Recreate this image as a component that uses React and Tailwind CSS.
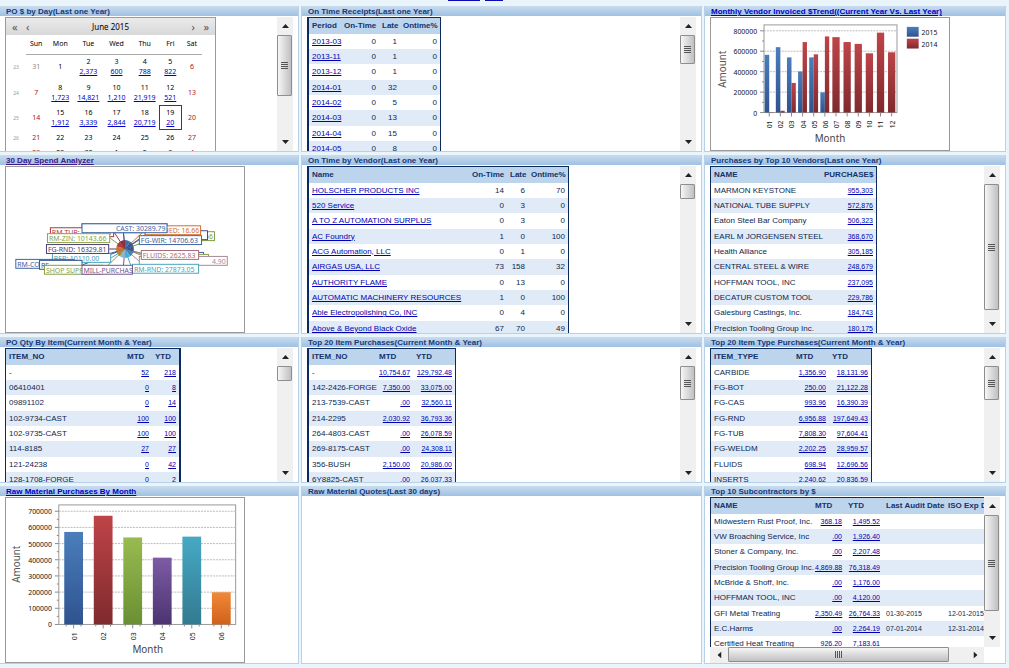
const receipts = [
  ["2013-03", "0", "1", "0"],
  ["2013-11", "0", "1", "0"],
  ["2013-12", "0", "1", "0"],
  ["2014-01", "0", "32", "0"],
  ["2014-02", "0", "5", "0"],
  ["2014-03", "0", "13", "0"],
  ["2014-04", "0", "15", "0"],
  ["2014-05", "0", "8", "0"],
]

const onTimeVendors = [
  ["HOLSCHER PRODUCTS INC", "14", "6", "70"],
  ["520 Service", "0", "3", "0"],
  ["A TO Z AUTOMATION SURPLUS", "0", "3", "0"],
  ["AC Foundry", "1", "0", "100"],
  ["ACG Automation, LLC", "0", "1", "0"],
  ["AIRGAS USA, LLC", "73", "158", "32"],
  ["AUTHORITY FLAME", "0", "13", "0"],
  ["AUTOMATIC MACHINERY RESOURCES", "1", "0", "100"],
  ["Able Electropolishing Co, INC", "0", "4", "0"],
  ["Above & Beyond Black Oxide", "67", "70", "49"],
]

const topVendors = [
  ["MARMON KEYSTONE", "955,303"],
  ["NATIONAL TUBE SUPPLY", "572,876"],
  ["Eaton Steel Bar Company", "506,323"],
  ["EARL M JORGENSEN STEEL", "368,670"],
  ["Health Alliance", "305,185"],
  ["CENTRAL STEEL & WIRE", "248,679"],
  ["HOFFMAN TOOL, INC", "237,095"],
  ["DECATUR CUSTOM TOOL", "229,786"],
  ["Galesburg Castings, Inc.", "184,743"],
  ["Precision Tooling Group Inc.", "180,175"],
]

const poQty = [
  ["-", "52", "218"],
  ["06410401", "0", "8"],
  ["09891102", "0", "14"],
  ["102-9734-CAST", "100", "100"],
  ["102-9735-CAST", "100", "100"],
  ["114-8185", "27", "27"],
  ["121-24238", "0", "42"],
  ["128-1708-FORGE", "0", "2"],
]

const itemPurchases = [
  ["-", "10,754.67", "129,792.48"],
  ["142-2426-FORGE", "7,350.00", "33,075.00"],
  ["213-7539-CAST", ".00", "32,560.11"],
  ["214-2295", "2,030.92", "36,793.36"],
  ["264-4803-CAST", ".00", "26,078.59"],
  ["269-8175-CAST", ".00", "24,308.11"],
  ["356-BUSH", "2,150.00", "20,986.00"],
  ["6Y8825-CAST", ".00", "26,037.33"],
]

const typePurchases = [
  ["CARBIDE", "1,356.90", "18,131.96"],
  ["FG-BOT", "250.00", "21,122.28"],
  ["FG-CAS", "993.96", "16,390.39"],
  ["FG-RND", "6,956.88", "197,649.43"],
  ["FG-TUB", "7,808.30", "97,604.41"],
  ["FG-WELDM", "2,202.25", "28,959.57"],
  ["FLUIDS", "698.94", "12,696.56"],
  ["INSERTS", "2,240.62", "20,836.59"],
]

const subcontractors = [
  ["Midwestern Rust Proof, Inc.", "368.18", "1,495.52", "", ""],
  ["VW Broaching Service, Inc", ".00", "1,926.40", "", ""],
  ["Stoner & Company, Inc.", ".00", "2,207.48", "", ""],
  ["Precision Tooling Group Inc.", "4,869.88", "76,318.49", "", ""],
  ["McBride & Shoff, Inc.", ".00", "1,176.00", "", ""],
  ["HOFFMAN TOOL, INC", ".00", "4,120.00", "", ""],
  ["GFI Metal Treating", "2,350.49", "26,764.33", "01-30-2015", "12-01-2015"],
  ["E.C.Harms", ".00", "2,264.19", "07-01-2014", "12-31-2014"],
  ["Certified Heat Treating", "926.20", "7,183.61", "", ""],
]

const receiptCols = [
  { label: "Period", width: "w-[32px]", link: true },
  { label: "On-Time", width: "w-[38px]", right: true, headRight: true },
  { label: "Late", width: "w-[21px]", right: true, headRight: true },
  { label: "Ontime%", width: "w-[40px]", right: true, headRight: true },
]

const vendorCols = [
  { label: "Name", width: "w-[160px]", link: true },
  { label: "On-Time", width: "w-[38px]", right: true, headRight: true },
  { label: "Late", width: "w-[21px]", right: true, headRight: true },
  { label: "Ontime%", width: "w-[40px]", right: true, headRight: true },
]

const topVendorCols = [
  { label: "NAME", width: "w-[110px]" },
  { label: "PURCHASE$", width: "w-[55px]", right: true, link: true, headRight: true },
]

const poQtyCols = [
  { label: "ITEM_NO", width: "w-[118px]" },
  { label: "MTD", width: "w-[28px]", right: true, link: true },
  { label: "YTD", width: "w-[27px]", right: true, link: true },
]

const itemCols = [
  { label: "ITEM_NO", width: "w-[67px]" },
  { label: "MTD", width: "w-[37px]", right: true, link: true },
  { label: "YTD", width: "w-[42px]", right: true, link: true },
]

const typeCols = [
  { label: "ITEM_TYPE", width: "w-[82px]" },
  { label: "MTD", width: "w-[36px]", right: true, link: true },
  { label: "YTD", width: "w-[42px]", right: true, link: true },
]

const subCols = [
  { label: "NAME", width: "w-[101px]" },
  { label: "MTD", width: "w-[33px]", right: true, link: true },
  { label: "YTD", width: "w-[38px]", right: true, link: true },
  { label: "Last Audit Date", width: "w-[62px]", date: true },
  { label: "ISO Exp Date", width: "w-[60px]", date: true },
]

const weeks = [
  { no: "23", height: "h-[26px]", days: [["31"], ["1"], ["2", "2,373"], ["3", "600"], ["4", "788"], ["5", "822"], ["6"]] },
  { no: "24", height: "h-[25px]", days: [["7"], ["8", "1,723"], ["9", "14,821"], ["10", "1,210"], ["11", "21,919"], ["12", "521"], ["13"]] },
  { no: "25", height: "h-[25px]", days: [["14"], ["15", "1,912"], ["16", "3,339"], ["17", "2,844"], ["18", "20,719"], ["19", "20"], ["20"]] },
  { no: "26", height: "h-[15px]", days: [["21"], ["22"], ["23"], ["24"], ["25"], ["26"], ["27"]] },
  { no: "27", height: "h-[15px]", days: [["28"], ["29"], ["30"], ["1"], ["2"], ["3"], ["4"]] },
]

const DataTable = ({ cols, rows, frame }) => (
  <table className={`table-fixed w-px border-separate border-spacing-0 border-[#0b2a5e] text-[8px] leading-[10px] text-[#0d1f4d] whitespace-nowrap ${frame}`}>
    <thead>
      <tr className="h-4 bg-[#bcd5ed]">
        {cols.map((col) => (
          <th key={col.label} className={`${col.width} px-[3px] font-bold text-[#15326c] ${col.headRight ? "text-right" : "text-left"}`}>
            {col.label}
          </th>
        ))}
      </tr>
    </thead>
    <tbody>
      {rows.map((row, i) => (
        <tr key={i} className="h-[15px] nth-[3n]:h-4 even:bg-[#e0ebf7]">
          {row.map((cell, j) => (
            <td key={j} className={`px-[3px] ${cols[j].right ? "text-right" : ""} ${(cols[j].right && cols[j].link) || cols[j].date ? "text-[7px]" : ""}`}>
              {cols[j].link ? (
                <a href="#" className="text-[#0000b4] underline">{cell}</a>
              ) : (
                cell
              )}
            </td>
          ))}
        </tr>
      ))}
    </tbody>
  </table>
)

const Arrow = ({ className }) => (
  <svg viewBox="0 0 7 4" className={`h-1 w-[7px] ${className}`} fill="#222">
    <path d="M3.5 0 7 4H0z" />
  </svg>
)

const ScrollBar = ({ thumb, grip = true }) => (
  <div className="flex w-4 shrink-0 flex-col bg-[#f0f0f0]">
    <button aria-label="Scroll up" className="flex h-[18px] shrink-0 items-center justify-center">
      <Arrow className="" />
    </button>
    <div className="min-h-0 flex-1">
      <div className={`flex w-[15px] flex-col items-center justify-center gap-px rounded-[1px] border border-[#8e8e8e] bg-linear-to-r from-[#f6f6f6] to-[#c0c0c3] ${thumb}`}>
        {grip && (
          <>
            <span className="h-px w-[7px] bg-[#555]" />
            <span className="h-px w-[7px] bg-[#555]" />
            <span className="h-px w-[7px] bg-[#555]" />
            <span className="h-px w-[7px] bg-[#555]" />
          </>
        )}
      </div>
    </div>
    <button aria-label="Scroll down" className="flex h-[18px] shrink-0 items-center justify-center">
      <Arrow className="rotate-180" />
    </button>
  </div>
)

const HScrollBar = () => (
  <div className="flex h-4 shrink-0 bg-[#f0f0f0]">
    <button aria-label="Scroll left" className="flex w-[18px] shrink-0 items-center justify-center">
      <Arrow className="-rotate-90" />
    </button>
    <div className="min-w-0 flex-1">
      <div className="flex h-[15px] w-[93%] items-center justify-center gap-px rounded-[1px] border border-[#8e8e8e] bg-linear-to-b from-[#f6f6f6] to-[#c0c0c3]">
        <span className="h-[7px] w-px bg-[#555]" />
        <span className="h-[7px] w-px bg-[#555]" />
        <span className="h-[7px] w-px bg-[#555]" />
        <span className="h-[7px] w-px bg-[#555]" />
      </div>
    </div>
    <button aria-label="Scroll right" className="flex w-[18px] shrink-0 items-center justify-center">
      <Arrow className="rotate-90" />
    </button>
  </div>
)

const Panel = ({ title, link, first, scroll, children }) => (
  <section className={`flex min-w-0 flex-col border-r border-b border-[#b7d2e8] bg-white ${first ? "" : "border-l"}`}>
    <h2 className="h-[10px] shrink-0 bg-linear-to-b from-[#c9dcee] to-[#9fc1e2] px-1.5 pt-px text-[8px] leading-[10px] font-bold whitespace-nowrap text-[#15397c]">
      {link ? <a href="#" className={`underline ${link}`}>{title}</a> : title}
    </h2>
    <div className="flex min-h-0 flex-1 justify-between px-[5px] pt-px">
      <div className="min-w-0 flex-1 overflow-hidden">{children}</div>
      {scroll}
    </div>
  </section>
)

const dayColor = (week, day) => {
  if (week === 0 && day === 0) return "text-[#888]"
  if (day === 0 || day === 6) return "text-[#b01020]"
  return "text-black"
}

const Calendar = () => (
  <div className="w-[211px] border border-[#9b9b9b] font-['Noto_Sans',sans-serif] text-[7px] leading-[10px]">
    <div className="flex h-[17px] items-center bg-linear-to-b from-[#ebebeb] to-[#d8d8d8] px-1.5">
      <button aria-label="Previous year" className="w-[14px] text-left text-[11px] text-[#555]">«</button>
      <button aria-label="Previous month" className="w-[14px] text-left text-[11px] text-[#555]">‹</button>
      <span className="flex-1 text-center text-[8px] text-black">June 2015</span>
      <button aria-label="Next month" className="w-[14px] text-right text-[11px] text-[#555]">›</button>
      <button aria-label="Next year" className="w-[14px] text-right text-[11px] text-[#555]">»</button>
    </div>
    <table className="table-fixed w-[196px] border-collapse text-center">
      <thead>
        <tr className="h-[19px] text-black">
          <th className="w-[20px]" />
          <th className="w-[20px] border-b border-[#aaa] font-normal">Sun</th>
          <th className="w-[28px] border-b border-[#aaa] font-normal">Mon</th>
          <th className="w-[28px] border-b border-[#aaa] font-normal">Tue</th>
          <th className="w-[28px] border-b border-[#aaa] font-normal">Wed</th>
          <th className="w-[28px] border-b border-[#aaa] font-normal">Thu</th>
          <th className="w-[23px] border-b border-[#aaa] font-normal">Fri</th>
          <th className="w-[20px] border-b border-[#aaa] font-normal">Sat</th>
        </tr>
      </thead>
      <tbody>
        {weeks.map((week, w) => (
          <tr key={week.no} className={week.height}>
            <td className="p-0 text-[5px] text-[#999]">{week.no}</td>
            {week.days.map(([day, amount], d) => (
              <td key={d} className={`p-0 ${dayColor(w, d)} ${day === "19" ? "shadow-[inset_0_0_0_1px_#8b1a2a]" : ""}`}>
                {day}
                {amount && <a href="#" className="block text-[#0000c8] underline">{amount}</a>}
              </td>
            ))}
          </tr>
        ))}
      </tbody>
    </table>
  </div>
)

const Gradients = ({ colors }) => (
  <defs>
    {colors.map(([id, from, to]) => (
      <linearGradient key={id} id={id} x1="0" y1="0" x2="0" y2="1">
        <stop offset="0" stopColor={from} />
        <stop offset="1" stopColor={to} />
      </linearGradient>
    ))}
  </defs>
)

const Axes = ({ left, right, top, bottom, step, ticks, scale }) => (
  <g>
    <rect x={left} y={top} width={right - left} height={bottom - top} fill="#fff" stroke="#999" />
    {ticks.map((tick) => {
      const y = bottom - tick * scale
      return (
        <g key={tick}>
          {tick > 0 && <line x1={left} x2={right} y1={y} y2={y} stroke="#bbb" strokeDasharray="2 1" />}
          <line x1={left - 4} x2={left} y1={y} y2={y} stroke="#888" />
          {tick > 0 && <line x1={left - 2} x2={left} y1={y + (step * scale) / 2} y2={y + (step * scale) / 2} stroke="#888" />}
          <text x="46" y={y + 3} textAnchor="end" fontSize="7" fill="#111">{tick}</text>
        </g>
      )
    })}
  </g>
)

const current = [565000, 640000, 540000, 402000, 540000, 198000]
const previous = [3000, 18000, 290000, 690000, 570000, 745000, 738000, 690000, 672000, 580000, 782000, 590000]

const TrendChart = () => {
  const scale = 83 / 800000
  return (
    <svg viewBox="0 0 240 134" className="h-[134px] w-60 border border-[#999] font-['Noto_Sans',sans-serif]">
      <Gradients colors={[["blue15", "#4a7ebb", "#2f538f"], ["red14", "#be4448", "#7f2a2d"]]} />
      <Axes left={53} right={188} top={7} bottom={96} step={200000} ticks={[0, 200000, 400000, 600000, 800000]} scale={scale} />
      {previous.map((value, i) => {
        const x = 58.3 + i * 11.3
        const both = i < current.length
        return (
          <g key={i}>
            {both && <rect x={x - 4.6} y={96 - current[i] * scale} width="4.6" height={current[i] * scale} fill="url(#blue15)" />}
            <rect x={both ? x : x - 3.7} y={96 - value * scale} width={both ? 4.4 : 7.4} height={value * scale} fill="url(#red14)" />
            <line x1={x} x2={x} y1="96" y2="100" stroke="#888" />
            <text transform={`translate(${x + 3} 108) rotate(-90)`} textAnchor="middle" fontSize="7" fill="#111">
              {String(i + 1).padStart(2, "0")}
            </text>
          </g>
        )
      })}
      <text transform="translate(14 52) rotate(-90)" textAnchor="middle" fontSize="10" fill="#555">Amount</text>
      <text x="120" y="126" textAnchor="middle" fontSize="10" fill="#444">Month</text>
      <rect x="198" y="9" width="12" height="10" fill="url(#blue15)" />
      <rect x="198" y="21" width="12" height="10" fill="url(#red14)" />
      <text x="213" y="17" fontSize="7" fill="#111">2015</text>
      <text x="213" y="29" fontSize="7" fill="#111">2014</text>
    </svg>
  )
}

const rawMaterial = [
  ["01", 572000, "url(#rmBlue)"],
  ["02", 672000, "url(#rmRed)"],
  ["03", 538000, "url(#rmGreen)"],
  ["04", 413000, "url(#rmPurple)"],
  ["05", 543000, "url(#rmTeal)"],
  ["06", 199000, "url(#rmOrange)"],
]

const RawMaterialChart = () => {
  const scale = 114.6 / 700000
  return (
    <svg viewBox="0 0 240 166" className="h-[166px] w-60 border border-[#999] font-['Noto_Sans',sans-serif]">
      <Gradients
        colors={[
          ["rmBlue", "#4a7ebb", "#2f538f"],
          ["rmRed", "#be4448", "#7f2a2d"],
          ["rmGreen", "#98bb50", "#6a8f33"],
          ["rmPurple", "#7d5ba6", "#4b3470"],
          ["rmTeal", "#46a9c4", "#337a90"],
          ["rmOrange", "#f0883a", "#d0621a"],
        ]}
      />
      <Axes left={53} right={232} top={7} bottom={128} step={100000} ticks={[0, 100000, 200000, 300000, 400000, 500000, 600000, 700000]} scale={scale} />
      {rawMaterial.map(([month, value, fill], i) => {
        const x = 68 + i * 29.9
        return (
          <g key={month}>
            <rect x={x - 9.5} y={128 - value * scale} width="19" height={value * scale} fill={fill} />
            <line x1={x} x2={x} y1="128" y2="132" stroke="#888" />
            <line x1={x - 7.5} x2={x - 7.5} y1="128" y2="130" stroke="#888" />
            <line x1={x + 7.5} x2={x + 7.5} y1="128" y2="130" stroke="#888" />
            <text transform={`translate(${x + 3} 140) rotate(-90)`} textAnchor="middle" fontSize="7" fill="#111">{month}</text>
          </g>
        )
      })}
      <text transform="translate(14 67) rotate(-90)" textAnchor="middle" fontSize="10" fill="#555">Amount</text>
      <text x="143" y="157" textAnchor="middle" fontSize="10" fill="#444">Month</text>
    </svg>
  )
}

// back to front: x, y, width, colour, text
const spendLabels = [
  [76, 57, 87, "#3d63a0", "RM-RAW"],
  [156, 65, 55, "#7d9a3c", "TOOLING: 4.56"],
  [140, 64, 64, "#5a4480", "INSERTS: 371.04"],
  [134, 69, 64, "#3d63a0", "FG-WIR: 14706.63"],
  [44, 61, 65, "#a8383c", "RM-TUB: 17268.08"],
  [46, 87, 60, "#46a0b8", "REP: 10110.00"],
  [9, 93, 60, "#3d63a0", "RM-COIL: 2931.11"],
  [33, 94, 44, "#2f538f", "RE"],
  [150, 86, 50, "#3d63a0", "PLATE: 811.01"],
  [155, 88, 50, "#8aa04a", "STEEL: 600.12"],
  [134, 90, 90, "#a48a94", "4.90"],
  [127, 98, 68, "#4aa3bd", "RM-RND: 27873.05"],
  [38, 99, 60, "#7f9f45", "SHOP SUPPLIES"],
  [76, 99, 52, "#6f568f", "MILL-PURCHAS"],
  [140, 59, 57, "#d2702a", "LATHED: 16.66"],
  [76, 57, 87, "#3d63a0", "CAST: 30289.79"],
  [41, 67, 64, "#86a347", "RM-ZIN: 10143.66"],
  [40, 78, 64, "#4d3a75", "FG-RND: 16329.81"],
  [136, 84, 59, "#a86c78", "FLUIDS: 2625.83"],
]

const endAligned = ["CAST: 30289.79", "LATHED: 16.66", "4.90", "TOOLING: 4.56"]

const slices = ["#3b6fa8", "#345a94", "#4a4f8f", "#3e86b5", "#46b0cf", "#8fb0d8", "#a98a3c", "#d0702a", "#b23a3e", "#8c3044"]

const pieSlice = (i) => {
  const a = (i / slices.length) * Math.PI * 2 - Math.PI / 2
  const b = ((i + 1) / slices.length) * Math.PI * 2 - Math.PI / 2
  return `M120 83L${120 + 9 * Math.cos(a)} ${83 + 9 * Math.sin(a)}A9 9 0 0 1 ${120 + 9 * Math.cos(b)} ${83 + 9 * Math.sin(b)}z`
}

const SpendChart = () => (
  <svg viewBox="0 0 240 167" className="h-[167px] w-60 border border-[#999] font-['Noto_Sans',sans-serif]">
    {spendLabels.map(([x, y, width, color], i) => (
      <line key={i} x1="120" y1="83" x2={x < 100 ? Math.min(x + width, 118) : x} y2={y + 5} stroke={color} />
    ))}
    {slices.map((color, i) => (
      <path key={i} d={pieSlice(i)} fill={color} />
    ))}
    {spendLabels.map(([x, y, width, color, text], i) => {
      const atEnd = endAligned.includes(text)
      return (
        <g key={i}>
          <rect x={x + 0.5} y={y + 0.5} width={width - 1} height="9" fill="#fff" stroke={color} />
          <text x={atEnd ? x + width - 2 : x + 2} y={y + 8} textAnchor={atEnd ? "end" : "start"} fontSize="7" fill={color}>
            {text}
          </text>
        </g>
      )
    })}
  </svg>
)

const App = () => {
  return (
    <main className="min-h-screen bg-[#e9f4fb] pr-[3px] font-['Liberation_Sans',Arial,sans-serif]">
      <div className="flex h-1.5 justify-center gap-[5px] pr-14" aria-hidden="true">
        <span className="h-px w-8 bg-[#0b0bb8]" />
        <span className="h-px w-[18px] bg-[#0b0bb8]" />
      </div>
      <div className="grid grid-cols-[299fr_401fr_302fr] grid-rows-[146px_179px_146px_178px] gap-x-[2px] gap-y-[3px]">
        <Panel first title="PO $ by Day(Last one Year)" scroll={<ScrollBar thumb="h-[61px]" />}>
          <Calendar />
        </Panel>
        <Panel title="On Time Receipts(Last one Year)" scroll={<ScrollBar thumb="h-[29px]" />}>
          <DataTable cols={receiptCols} rows={receipts} frame="border-t border-l-2 border-r" />
        </Panel>
        <Panel title="Monthly Vendor Invoiced $Trend((Current Year Vs. Last Year)" link="text-[#0000c8]">
          <TrendChart />
        </Panel>

        <Panel first title="30 Day Spend Analyzer" link="text-[#3c1a8c]">
          <SpendChart />
        </Panel>
        <Panel title="On Time by Vendor(Last one Year)" scroll={<ScrollBar thumb="h-[15px]" grip={false} />}>
          <DataTable cols={vendorCols} rows={onTimeVendors} frame="border-t border-l-2 border-r" />
        </Panel>
        <Panel title="Purchases by Top 10 Vendors(Last one Year)" scroll={<ScrollBar thumb="h-[126px]" />}>
          <DataTable cols={topVendorCols} rows={topVendors} frame="border-x border-t" />
        </Panel>

        <Panel first title="PO Qty By Item(Current Month & Year)" scroll={<ScrollBar thumb="h-[15px]" grip={false} />}>
          <DataTable cols={poQtyCols} rows={poQty} frame="border-t border-l border-r-2" />
        </Panel>
        <Panel title="Top 20 Item Purchases(Current Month & Year)" scroll={<ScrollBar thumb="h-[34px]" />}>
          <DataTable cols={itemCols} rows={itemPurchases} frame="border-t border-l-2 border-r" />
        </Panel>
        <Panel title="Top 20 Item Type Purchases(Current Month & Year)" scroll={<ScrollBar thumb="h-[34px]" />}>
          <DataTable cols={typeCols} rows={typePurchases} frame="border-x border-t" />
        </Panel>

        <Panel first title="Raw Material Purchases By Month" link="text-[#0000c8]">
          <RawMaterialChart />
        </Panel>
        <Panel title="Raw Material Quotes(Last 30 days)" />
        <Panel title="Top 10 Subcontractors by $">
          <div className="flex h-full flex-col">
            <div className="flex min-h-0 flex-1">
              <div className="min-w-0 flex-1 overflow-hidden">
                <DataTable cols={subCols} rows={subcontractors} frame="border-x border-t" />
              </div>
              <ScrollBar thumb="h-24" />
            </div>
            <div className="pr-4">
              <HScrollBar />
            </div>
          </div>
        </Panel>
      </div>
    </main>
  )
}

export default App
